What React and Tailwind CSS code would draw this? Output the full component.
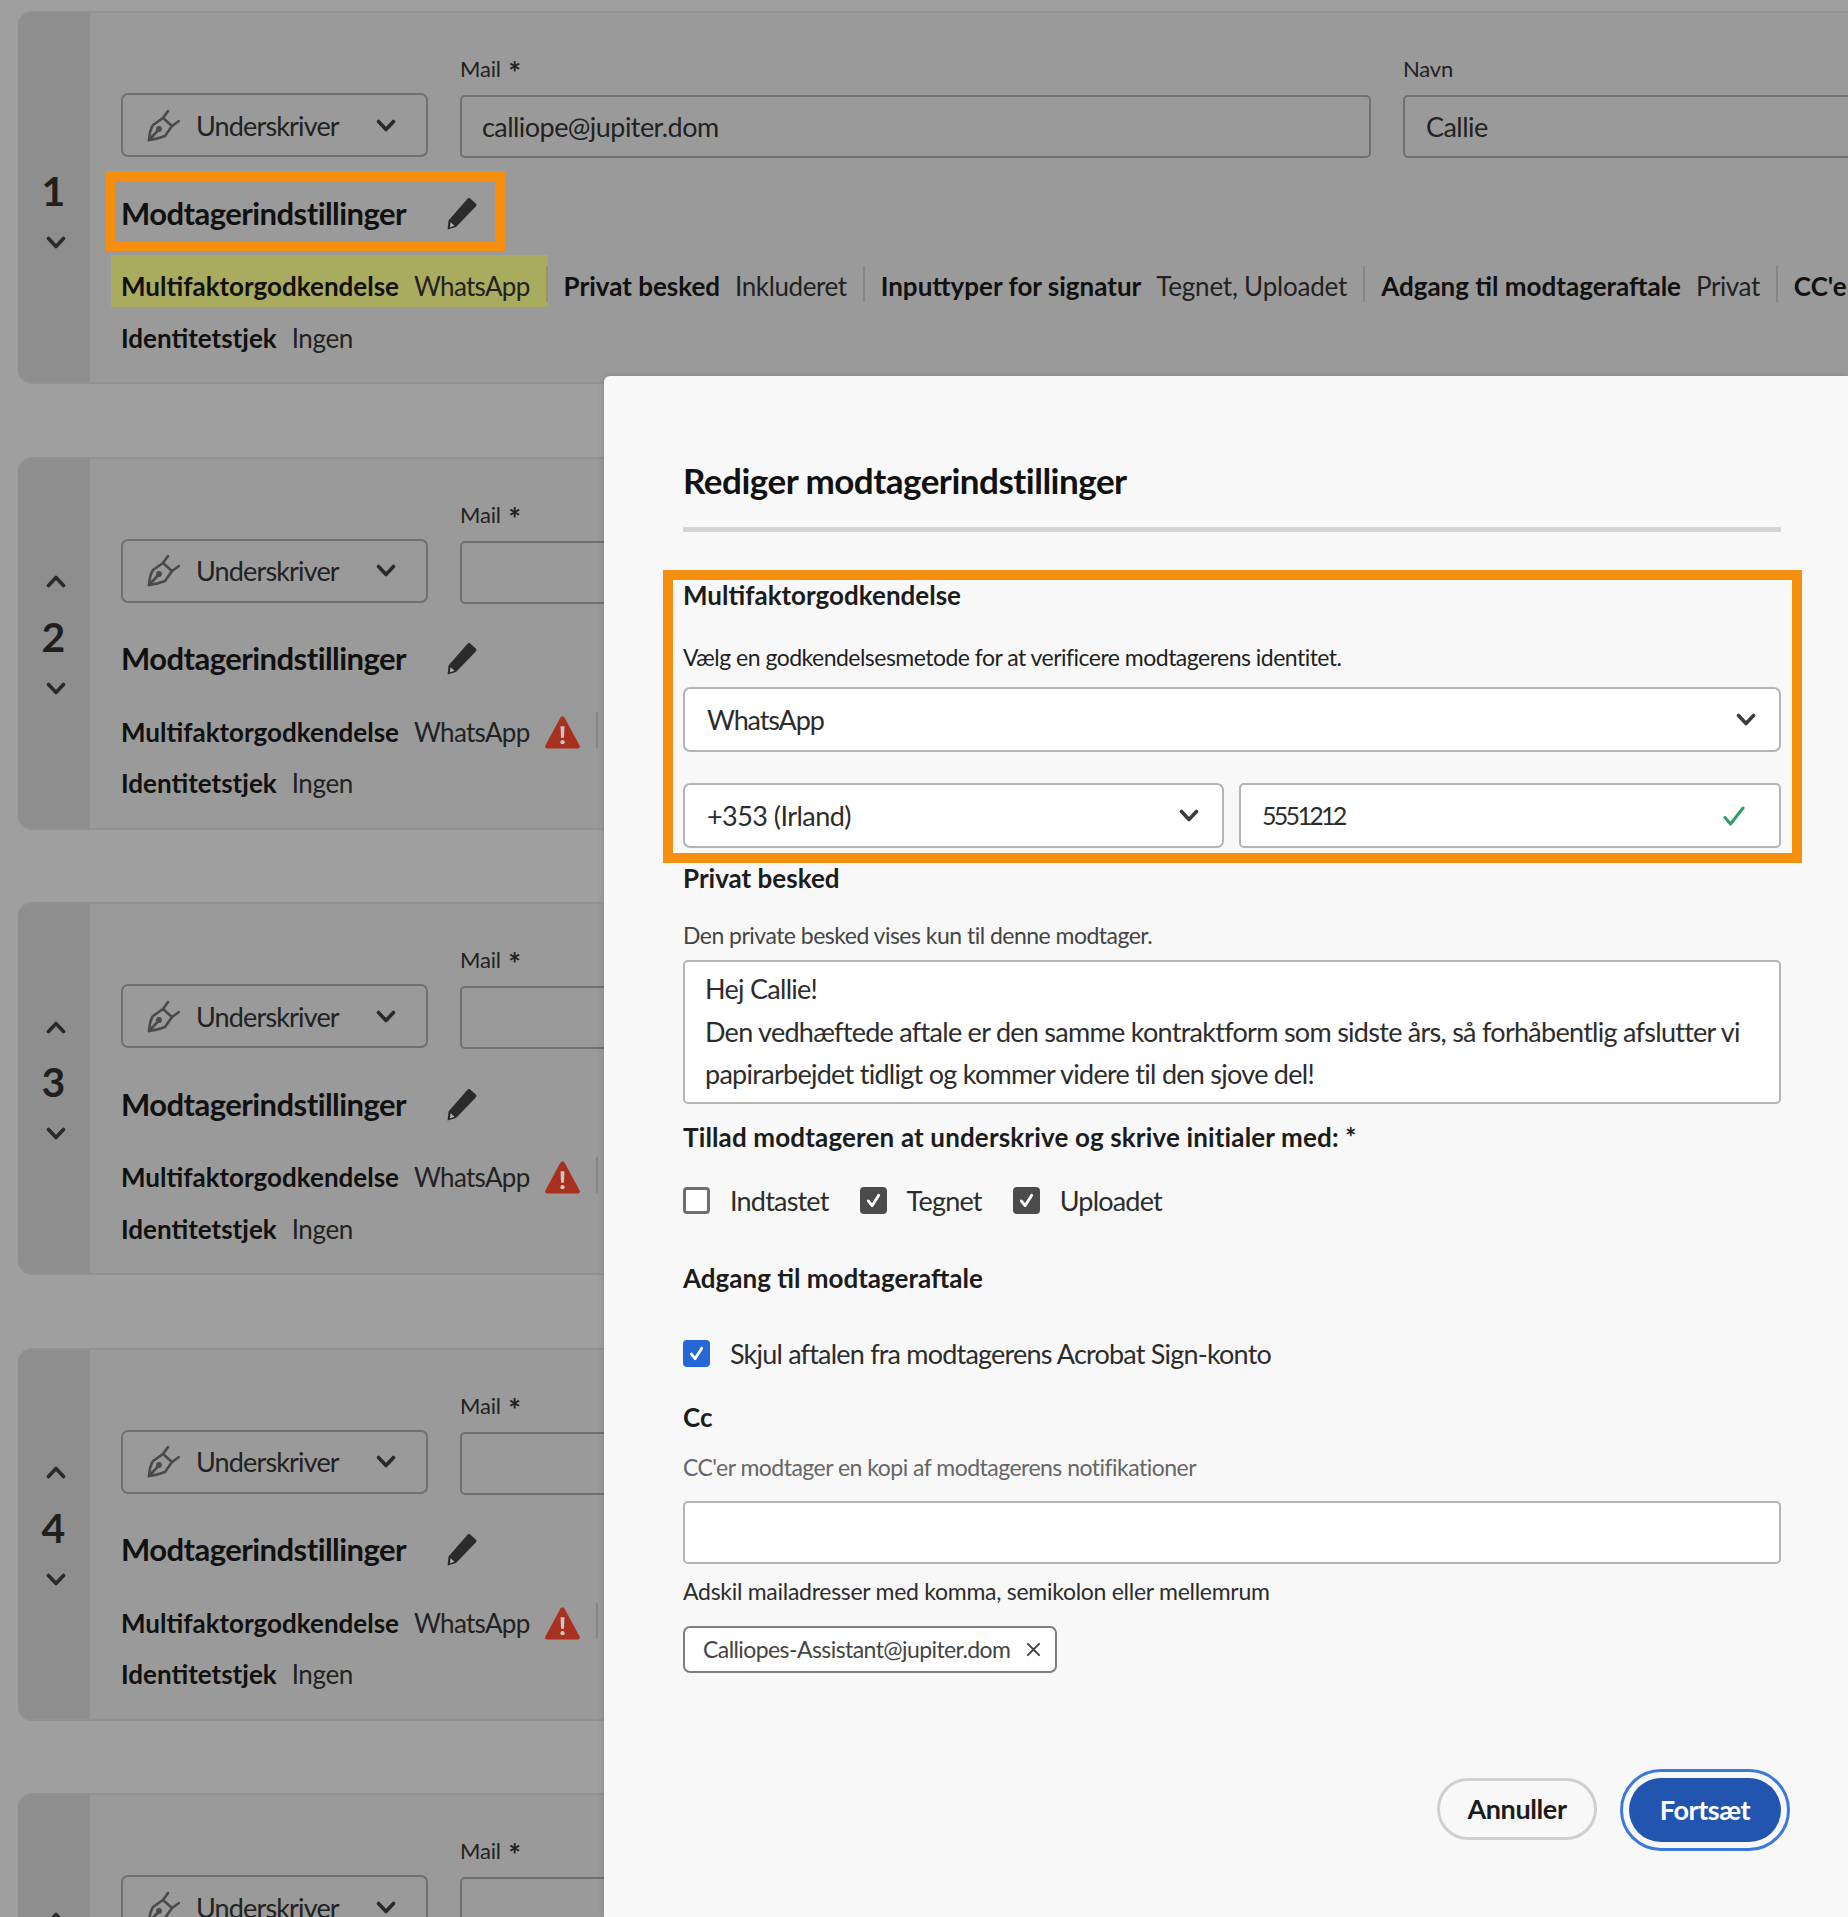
import React from "react";

const ORANGE = "border-[#f68f10]";

const Chevron = ({ up = false, className = "" }) => (
  <svg viewBox="0 0 20 14" className={className} fill="none" stroke="currentColor" strokeWidth="3.6" strokeLinecap="round" strokeLinejoin="round">
    <path d={up ? "M2.5 11 10 3l7.5 8" : "M2.5 3 10 11l7.5-8"} />
  </svg>
);

const SignerIcon = () => (
  <svg viewBox="0 0 33 33" className="h-[33px] w-[33px] shrink-0 text-[#4a4a4a]" fill="none" stroke="currentColor" strokeWidth="2.6" strokeLinejoin="round" strokeLinecap="round">
    <path d="M2 31 C2.500 24 4 19 6 16 L16 9 L25 17 L18 27 C13 29 7 30.500 2 31Z" />
    <path d="M2 31 10.500 22" />
    <circle cx="12" cy="20" r="1.600" fill="currentColor" />
    <path d="M16 9 21 2" />
    <path d="M25 17 32 12" />
  </svg>
);

const PencilIcon = () => (
  <svg viewBox="0 0 30 33" className="h-[33px] w-[30px] text-[#2b2b2b]">
    <path d="M20.500 1.800c.8-.9 1.800-1 2.700-.3l5.600 5.100c.9.800.9 1.800.2 2.700L9 30 .6 32.600 1.500 23.500Z" fill="currentColor" />
    <path d="M3.600 25.200 7.400 28.700 3 30.200Z" fill="#b5b5b5" />
  </svg>
);

const WarningIcon = () => (
  <svg viewBox="0 0 36 33" className="h-[33px] w-[35px] shrink-0">
    <path d="M18 0c1 0 1.700.5 2.200 1.400l15.400 28.400c.8 1.500-.1 3.200-1.800 3.200H2.200C.5 33-.4 31.300.4 29.800L15.800 1.400C16.300.5 17 0 18 0Z" fill="#a8301f" />
    <path d="M16 10h4l-.5 12h-3Z" fill="#c8c8c8" />
    <circle cx="18" cy="26.500" r="2.200" fill="#c8c8c8" />
  </svg>
);

const CheckMark = ({ className = "" }) => (
  <svg viewBox="0 0 20 20" className={className} fill="none" stroke="currentColor" strokeWidth="3" strokeLinecap="round" strokeLinejoin="round">
    <path d="M4.500 10.500 8.500 15.500 15.500 4.500" />
  </svg>
);

const Checkbox = ({ checked, blue, label }) => (
  <label className="flex items-center gap-[20px] text-[27px] leading-[27px] tracking-[-0.8px] text-[#2c2c2c]">
    <span
      className={`flex h-[27px] w-[27px] items-center justify-center rounded-[4px] border-[3px] ${
        checked ? (blue ? "border-[#2468d8] bg-[#2468d8]" : "border-[#4b4b4b] bg-[#4b4b4b]") : "border-[#6e6e6e] bg-white"
      }`}
    >
      {checked && <CheckMark className="h-[19px] w-[19px] text-white" />}
    </span>
    {label}
  </label>
);

const SettingItem = ({ label, value, valueClass = "tracking-[-0.4px]", warn, last, highlight }) => (
  <div className={`flex h-[52px] shrink-0 items-center ${highlight ? "-ml-[10px] bg-[#a9ab5f] pl-[10px]" : ""}`}>
    <div className={`flex items-center whitespace-nowrap pt-[11px] ${last ? "" : "pr-[16px]"}`}>
      <span className="font-bold text-[#111]">{label}</span>
      <span className={`ml-[15px] text-[#222] ${valueClass}`}>{value}</span>
      {warn && <span className="ml-[15px]"><WarningIcon /></span>}
    </div>
    {!last && <div className={`mt-[6px] h-[36px] w-[2px] ${highlight ? "bg-[#96985a]" : "bg-[#858585]"}`} />}
  </div>
);

const RecipientCard = ({ n, email, name, active }) => (
  <div className="flex h-[373px] w-[1900px] shrink-0 overflow-hidden rounded-l-[14px] border-y-2 border-[#929292] bg-[#9a9a9a]">
    <div className="relative flex w-[72px] shrink-0 flex-col items-center bg-[#8e8e8e] pt-[115px] text-[#1f1f1f]">
      <div className="ml-[4px] flex h-[16px] items-center">
        {n > 1 && <Chevron up className="h-[15px] w-[20px] text-[#2a2a2a]" />}
      </div>
      <div className="-ml-[1px] mt-[22px] h-[50px] text-[41px] font-bold leading-[50px]">{n}</div>
      <Chevron className="ml-[4px] mt-[19px] h-[15px] w-[20px] text-[#2a2a2a]" />
    </div>

    <div className="flex-1 pl-[31px] pt-[41px] text-[26px]">
      <div className="flex items-end">
        <div className="mb-px flex h-[64px] w-[307px] items-center rounded-[7px] border-2 border-[#707070] pl-[24px] text-[27px] tracking-[-0.85px] text-[#222]">
          <SignerIcon />
          <span className="ml-[16px] pt-[2px]">Underskriver</span>
          <Chevron className="ml-[37px] h-[15px] w-[20px] text-[#2a2a2a]" />
        </div>
        <div className="ml-[32px] w-[911px]">
          <div className="mb-[11px] h-[30px] text-[22px] leading-[30px] tracking-[-0.2px] text-[#222]">
            Mail <span className="ml-[2px] inline-block translate-y-[7px] text-[30px] font-bold leading-[22px]">*</span>
          </div>
          <div className="flex h-[63px] items-center rounded-[5px] border-2 border-[#707070] pl-[20px] pt-[2px] text-[27px] tracking-[-0.55px] text-[#222]">{email}</div>
        </div>
        <div className="ml-[32px] w-[600px]">
          <div className="mb-[11px] h-[30px] text-[22px] leading-[30px] tracking-[-0.2px] text-[#222]">Navn</div>
          <div className="flex h-[63px] items-center rounded-[5px] border-2 border-[#707070] pl-[21px] pt-[2px] text-[27px] tracking-[-0.55px] text-[#222]">{name}</div>
        </div>
      </div>

      <div className="relative mt-[35px] flex h-[40px] w-fit items-center">
        {active && <div className={`absolute -left-[16px] -top-[22px] h-[80px] w-[400px] border-[10px] ${ORANGE}`} />}
        <h3 className="text-[31px] font-bold tracking-[-0.55px] text-[#111]">Modtagerindstillinger</h3>
        <span className="ml-[41px]"><PencilIcon /></span>
      </div>

      <div className="mt-[22px] flex h-[52px] items-start">
        <SettingItem label="Multifaktorgodkendelse" value="WhatsApp" valueClass="tracking-[-0.7px]" warn={!active} highlight={active} />
        <div className="pl-[16px]"><SettingItem label="Privat besked" value="Inkluderet" /></div>
        <div className="pl-[16px]"><SettingItem label="Inputtyper for signatur" value="Tegnet, Uploadet" valueClass="tracking-[-0.2px]" /></div>
        <div className="pl-[16px]"><SettingItem label="Adgang til modtageraftale" value="Privat" /></div>
        <div className="pl-[16px]"><SettingItem label="CC'er" value="1" last /></div>
      </div>
      <div className="mt-[11px] flex h-[40px] items-center whitespace-nowrap">
        <span className="font-bold text-[#111]">Identitetstjek</span>
        <span className="ml-[15px] text-[#222] tracking-[-0.4px]">Ingen</span>
      </div>
    </div>
  </div>
);

const FieldLabel = ({ children, className = "" }) => (
  <div className={`flex h-[40px] items-center text-[26px] font-bold text-[#1c1c1c] ${className}`}>{children}</div>
);

const HelpText = ({ children, className = "", tracking = "tracking-[-0.52px]" }) => (
  <div className={`flex h-[30px] items-center text-[23px] ${tracking} ${className}`}>{children}</div>
);

const Select = ({ children, className = "" }) => (
  <div className={`flex h-[65px] items-center justify-between rounded-[7px] border-2 border-[#b4b4b4] bg-white pl-[22px] text-[27px] text-[#2c2c2c] ${className}`}>
    <span className="pt-[2px]">{children}</span>
    <Chevron className="mr-[23px] h-[15px] w-[20px] text-[#3c3c3c]" />
  </div>
);

const recipients = [
  { n: 1, email: "calliope@jupiter.dom", name: "Callie", active: true },
  { n: 2 },
  { n: 3 },
  { n: 4 },
  { n: 5 },
];

export default function App() {
  return (
    <div className="relative h-[1917px] w-[1848px] overflow-hidden bg-[#9f9f9f] font-[Lato,sans-serif]">
      {/* baggrund: modtagerliste */}
      <div className="flex flex-col gap-[72.5px] pl-[18px] pt-[11px]">
        {recipients.map((r) => (
          <RecipientCard key={r.n} {...r} />
        ))}
      </div>

      {/* dialog */}
      <div className="absolute bottom-0 left-[604px] right-0 top-[376px] rounded-tl-[6px] bg-[#f8f8f8] pl-[79px] pr-[67px] pt-[82px] shadow-[0_0_6px_rgba(0,0,0,0.15)]">
        <h2 className="flex h-[44px] items-center text-[35px] font-bold tracking-[-0.5px] text-[#111]">Rediger modtagerindstillinger</h2>
        <div className="mt-[25px] h-[5px] bg-[#d5d5d5]" />

        <div className="relative mt-[43px]">
          <div className={`pointer-events-none absolute -left-[20px] -top-[5px] h-[293px] w-[1139px] border-[10px] ${ORANGE}`} />
          <FieldLabel>Multifaktorgodkendelse</FieldLabel>
          <HelpText className="mt-[27px] text-[#1f1f1f]">Vælg en godkendelsesmetode for at verificere modtagerens identitet.</HelpText>
          <Select className="mt-[15px] tracking-[-1.15px]">WhatsApp</Select>
          <div className="mt-[31px] flex gap-[15px]">
            <Select className="w-[541px] tracking-[-0.55px]">+353 (Irland)</Select>
            <div className="flex h-[65px] flex-1 items-center justify-between rounded-[5px] border-2 border-[#b4b4b4] bg-white pl-[21px] pr-[34px] text-[25px] tracking-[-2.7px] text-[#2c2c2c]">
              <span className="pt-[1px]">5551212</span>
              <svg viewBox="0 0 22 20" className="h-[20px] w-[22px] text-[#2f9e6b]" fill="none" stroke="currentColor" strokeWidth="3" strokeLinecap="round" strokeLinejoin="round">
                <path d="M2 11.500 7.500 18 20 2" />
              </svg>
            </div>
          </div>
        </div>

        <FieldLabel className="mt-[10px]">Privat besked</FieldLabel>
        <HelpText className="mt-[22px] text-[#444]">Den private besked vises kun til denne modtager.</HelpText>
        <div className="mt-[10px] h-[144px] rounded-[5px] border-2 border-[#b4b4b4] bg-white pl-[20px] pr-[20px] pt-[6px] text-[27px] leading-[42.5px] tracking-[-0.72px] text-[#2c2c2c]">
          <p>Hej Callie!</p>
          <p>Den vedhæftede aftale er den samme kontraktform som sidste års, så forhåbentlig afslutter vi papirarbejdet tidligt og kommer videre til den sjove del!</p>
        </div>

        <FieldLabel className="mt-[13px] tracking-[0.15px]">Tillad modtageren at underskrive og skrive initialer med: *</FieldLabel>
        <div className="mt-[30px] flex items-center gap-[31px]">
          <Checkbox label="Indtastet" />
          <Checkbox checked label="Tegnet" />
          <Checkbox checked label="Uploadet" />
        </div>

        <FieldLabel className="mt-[44px]">Adgang til modtageraftale</FieldLabel>
        <div className="mt-[42px]">
          <Checkbox checked blue label="Skjul aftalen fra modtagerens Acrobat Sign-konto" />
        </div>

        <FieldLabel className="mt-[30px]">Cc</FieldLabel>
        <HelpText className="mt-[15px] text-[#666]">CC'er modtager en kopi af modtagerens notifikationer</HelpText>
        <div className="mt-[19px] h-[63px] rounded-[5px] border-2 border-[#b4b4b4] bg-white" />
        <HelpText className="mt-[12px] text-[#2c2c2c]" tracking="tracking-[-0.28px]">Adskil mailadresser med komma, semikolon eller mellemrum</HelpText>

        <div className="mt-[20px] flex h-[47px] w-[374px] items-center whitespace-nowrap rounded-[7px] border-2 border-[#7e7e7e] bg-white pl-[18px] text-[23px] tracking-[-0.58px] text-[#444]">
          Calliopes-Assistant@jupiter.dom
          <svg viewBox="0 0 16 16" className="ml-[16px] h-[15px] w-[15px] shrink-0 text-[#444]" fill="none" stroke="currentColor" strokeWidth="2.200" strokeLinecap="round">
            <path d="M2 2l12 12M14 2 2 14" />
          </svg>
        </div>

        <div className="mt-[105px] flex justify-end gap-[32px]">
          <button className="h-[62px] w-[160px] rounded-full border-[3px] border-[#cfcfcf] text-[27px] font-bold tracking-[-0.4px] text-[#1c1c1c]">Annuller</button>
          <button className="h-[64px] w-[152px] rounded-full bg-[#2155b0] text-[27px] font-bold tracking-[-0.4px] text-white outline-[3px] outline-offset-[6px] outline-[#3a78e0]">Fortsæt</button>
        </div>
      </div>
    </div>
  );
}
